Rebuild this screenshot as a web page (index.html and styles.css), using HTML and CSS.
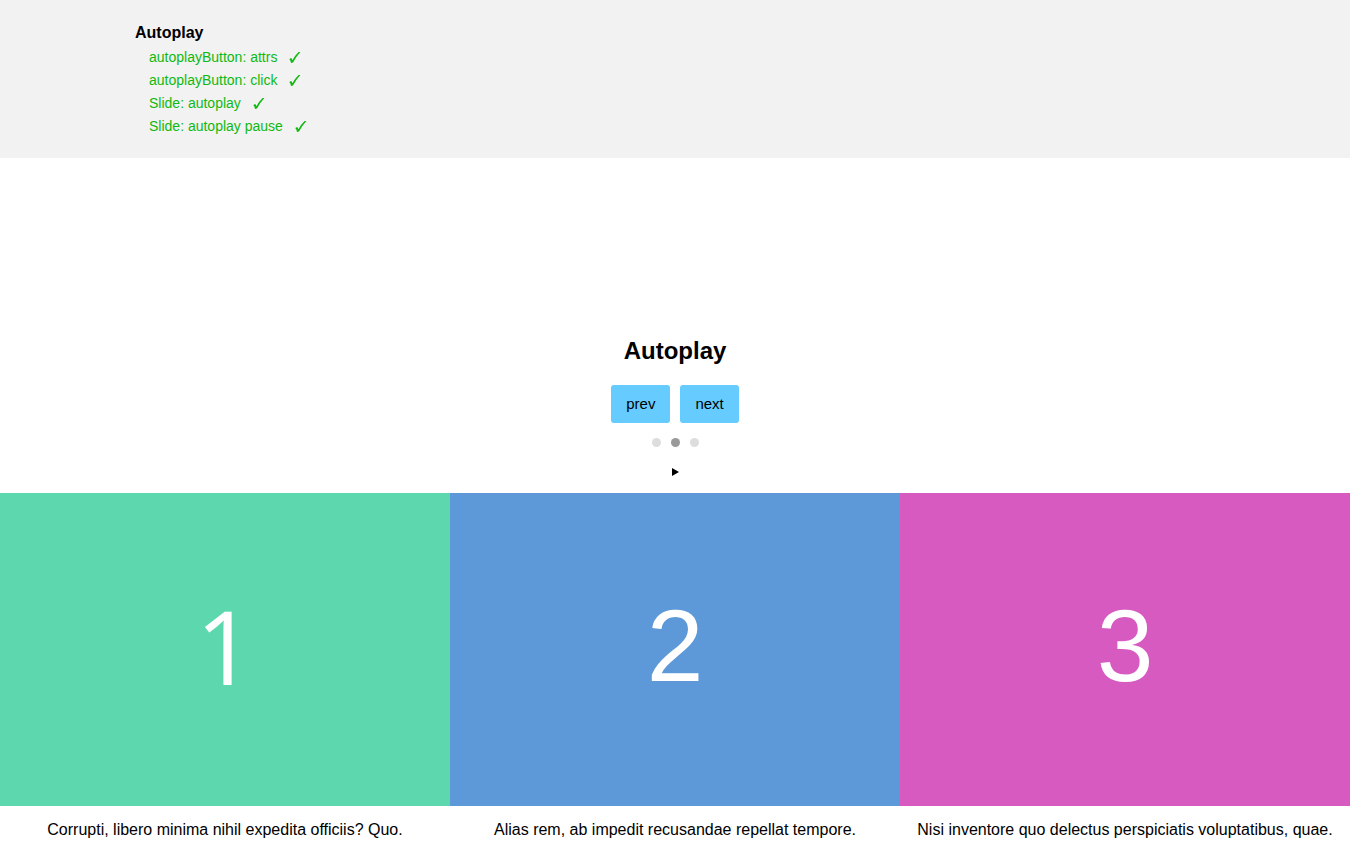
FILE: index.html
```html
<!DOCTYPE html>
<html lang="en">
<head>
<meta charset="utf-8">
<meta name="viewport" content="width=device-width, initial-scale=1">
<title>Autoplay</title>
<link rel="stylesheet" href="styles.css">
</head>
<body>
<svg class="defs" aria-hidden="true"><symbol id="check" viewBox="0 0 12 12"><path d="M0.3 7 L2.2 6.1 Q3 7 3.4 8.2 Q6.2 3.2 9.6 0 L11.4 0 Q7.2 4.6 4 10.4 L2 11 Q1.7 8.6 0.3 7 Z"/></symbol></svg>
<header class="results">
  <h2 class="results-title">Autoplay</h2>
  <ul class="results-list">
    <li class="result">autoplayButton: attrs<svg class="check" role="img" aria-label="passed"><use href="#check"/></svg></li>
    <li class="result">autoplayButton: click<svg class="check" role="img" aria-label="passed"><use href="#check"/></svg></li>
    <li class="result">Slide: autoplay<svg class="check" role="img" aria-label="passed"><use href="#check"/></svg></li>
    <li class="result">Slide: autoplay pause<svg class="check" role="img" aria-label="passed"><use href="#check"/></svg></li>
  </ul>
</header>
<main class="demo">
  <h1 class="demo-title">Autoplay</h1>
  <div class="controls">
    <button class="control" type="button">prev</button>
    <button class="control" type="button">next</button>
  </div>
  <div class="dots">
    <button class="dot" type="button" aria-label="Slide 1"></button>
    <button class="dot dot-active" type="button" aria-label="Slide 2"></button>
    <button class="dot" type="button" aria-label="Slide 3"></button>
  </div>
  <button class="play" type="button" aria-label="Play"><svg class="play-icon" viewBox="0 0 7 8" aria-hidden="true"><path d="M0 0L7 4L0 8Z"/></svg></button>
  <div class="slides">
    <figure class="slide"><div class="picture green">1</div><figcaption class="caption">Corrupti, libero minima nihil expedita officiis? Quo.</figcaption></figure>
    <figure class="slide"><div class="picture blue">2</div><figcaption class="caption">Alias rem, ab impedit recusandae repellat tempore.</figcaption></figure>
    <figure class="slide"><div class="picture pink">3</div><figcaption class="caption">Nisi inventore quo delectus perspiciatis voluptatibus, quae.</figcaption></figure>
  </div>
</main>
</body>
</html>
```
FILE: styles.css
```css
* {
  box-sizing: border-box;
}

body {
  margin: 0;
  background: #fff;
  color: #000;
  font-family: "Liberation Sans", Arial, sans-serif;
  font-size: 16px;
}

.defs {
  display: none;
}

.results {
  padding: 20px 10%;
  background: #f2f2f2;
}

.results-title {
  margin: 0;
  font-size: 16px;
  line-height: 26px;
}

.results-list {
  margin: 0;
  padding: 0 0 0 14px;
  list-style: none;
}

.result {
  display: flex;
  align-items: center;
  gap: 12px;
  color: #10b910;
  font-size: 14px;
  line-height: 23px;
}

.check {
  width: 12px;
  height: 12px;
  fill: currentColor;
}

.demo {
  display: flex;
  flex-direction: column;
  align-items: center;
  padding-top: 179px;
}

.demo-title {
  margin: 0 0 20px;
  font-size: 24px;
  line-height: 28px;
}

.controls {
  display: flex;
  gap: 10px;
}

.control {
  padding: 0 15px;
  border: 0;
  border-radius: 3px;
  background: #6cf;
  color: #000;
  font-family: inherit;
  font-size: 15px;
  line-height: 38px;
}

.dots {
  display: flex;
  gap: 10px;
  padding: 15px 0;
}

.dot {
  width: 9px;
  height: 9px;
  padding: 0;
  border: 0;
  border-radius: 50%;
  background: #ddd;
}

.dot-active {
  background: #999;
}

.play {
  display: flex;
  padding: 6px 10px 17px;
  border: 0;
  background: none;
}

.play-icon {
  width: 7px;
  height: 8px;
}

.slides {
  display: grid;
  grid-template-columns: repeat(3, 1fr);
  width: 100%;
}

.slide {
  margin: 0;
}

.picture {
  display: flex;
  align-items: center;
  justify-content: center;
  aspect-ratio: 36 / 25;
  padding-bottom: 6px;
  color: #fff;
  font-size: 102px;
  line-height: 1;
}

.green {
  background: #5dd8ae;
  font-family: "Open Sans", sans-serif;
}

.blue {
  background: #5d99d8;
}

.pink {
  background: #d65ac0;
}

.caption {
  padding: 15px 10px;
  line-height: 18px;
  text-align: center;
}
```
